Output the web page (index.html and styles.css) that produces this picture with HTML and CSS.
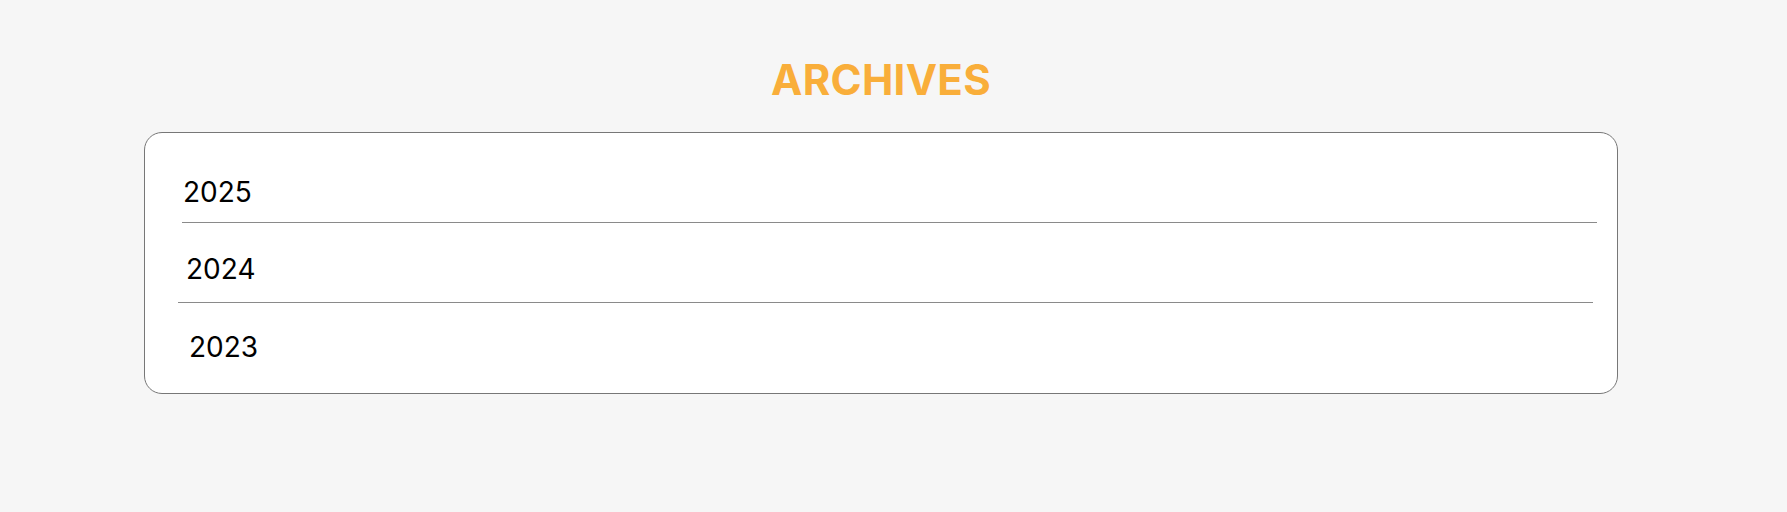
FILE: index.html
```html
<!DOCTYPE html>
<html lang="en">
<head>
<meta charset="utf-8">
<title>Archives</title>
<link rel="stylesheet" href="styles.css">
</head>
<body>
<main class="page">
  <h1 class="title">ARCHIVES</h1>
  <section class="card">
    <div class="row row-a"><span class="year">2025</span></div>
    <div class="row row-b"><span class="year">2024</span></div>
    <div class="row row-c"><span class="year">2023</span></div>
  </section>
</main>
</body>
</html>
```

FILE: styles.css
```css
html, body {
  margin: 0;
  padding: 0;
  background: #f6f6f6;
}

.page {
  width: 1474px;
  margin-left: 144px;
  padding-top: 55px;
  font-family: Inter, "Liberation Sans", sans-serif;
}

.title {
  margin: 0;
  text-align: center;
  font-size: 42px;
  line-height: 50px;
  font-weight: 700;
  color: #f9ae3a;
  letter-spacing: 0.3px;
}

.card {
  margin-top: 27px;
  background: #ffffff;
  border: 1px solid #777777;
  border-radius: 18px;
  display: flex;
  flex-direction: column;
}

.row {
  display: flex;
}

.year {
  font-size: 28px;
  line-height: 34px;
  color: #000000;
}

.row-a {
  margin: 0 20px 0 37px;
  padding: 42px 0 13px 1px;
  border-bottom: 1px solid #8a8a8a;
}

.row-b {
  margin: 0 24px 0 33px;
  padding: 29px 0 16px 8px;
  border-bottom: 1px solid #8a8a8a;
}

.row-c {
  margin: 0 24px 0 33px;
  padding: 27px 0 29px 11px;
}
```
